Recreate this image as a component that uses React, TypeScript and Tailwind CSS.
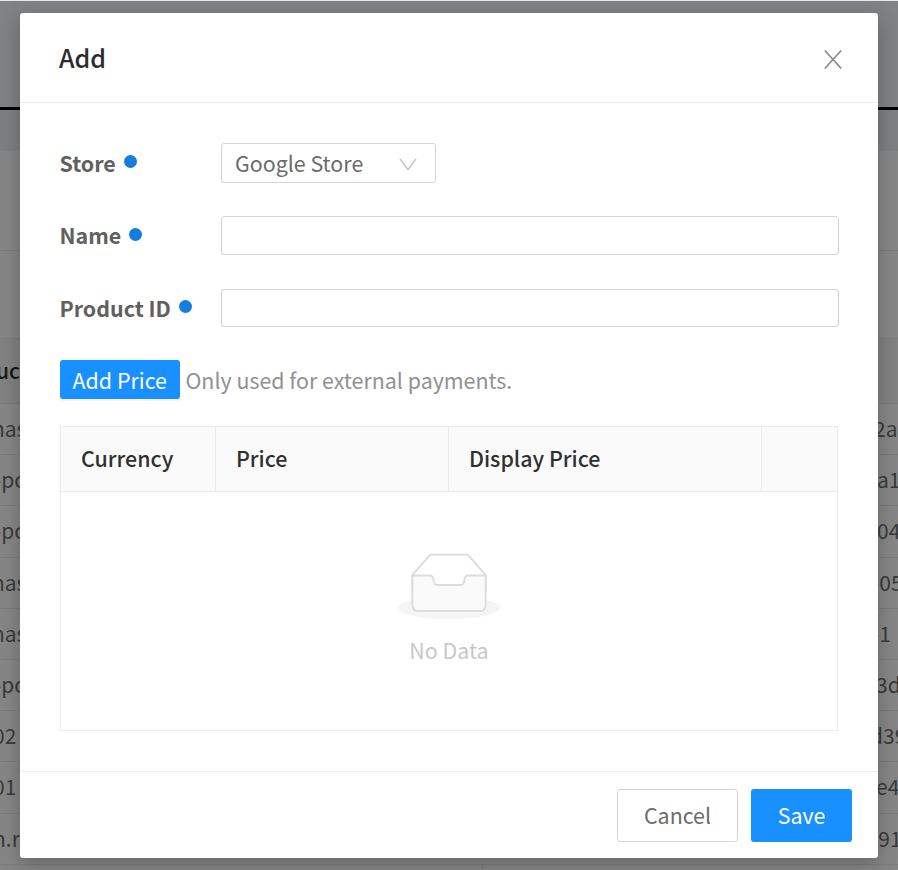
import React from "react";

type Row = { left: string; leftShift: string; right: string; rightShift: string };

const rows: Row[] = [
  { left: "has", leftShift: "-ml-[8px]", right: "2a", rightShift: "-ml-[4px]" },
  { left: "-pc", leftShift: "-ml-[6px]", right: "a1", rightShift: "-ml-[1px]" },
  { left: "-pc", leftShift: "-ml-[6px]", right: "04", rightShift: "-ml-[1px]" },
  { left: "has", leftShift: "-ml-[8px]", right: "-05", rightShift: "-ml-[6px]" },
  { left: "has", leftShift: "-ml-[8px]", right: "-1", rightShift: "-ml-[6px]" },
  { left: "-pc", leftShift: "-ml-[6px]", right: "3d", rightShift: "-ml-[2px]" },
  { left: "02", leftShift: "-ml-[7px]", right: "d39", rightShift: "-ml-[8px]" },
  { left: "01", leftShift: "-ml-[7px]", right: "e4", rightShift: "-ml-[2px]" },
  { left: "n.r", leftShift: "-ml-[7px]", right: "-91", rightShift: "-ml-[7px]" },
];

function PageBehind() {
  return (
    <div className="flex h-full flex-col border-t border-[#e8e8e8] bg-[#868686] text-[21px] leading-none text-[#3a3a3a]">
      <div className="h-[106px] shrink-0 bg-[#818284]" />
      <div className="h-[3px] shrink-0 bg-black" />
      <div className="h-[41px] shrink-0 bg-[#7d7f81]" />
      <div className="h-[100px] shrink-0 border-b border-[#7c7c7c]" />
      <div className="h-[88px] shrink-0 border-b border-[#7c7c7c]" />
      <div className="flex h-[65px] shrink-0 items-center border-b border-[#7c7c7c] bg-[#828282] pb-[2px] font-medium text-[#171717]">
        <div className="w-[20px] whitespace-nowrap">
          <div className="-ml-[4px]">uct</div>
        </div>
      </div>
      {rows.map((r, i) => (
        <div key={i} className="flex h-[51.2px] shrink-0 items-center justify-between border-b border-[#7c7c7c] pb-[1px]">
          <div className="w-[20px] whitespace-nowrap">
            <div className={r.leftShift}>{r.left}</div>
          </div>
          <div className="w-[20px] whitespace-nowrap">
            <div className={r.rightShift}>{r.right}</div>
          </div>
        </div>
      ))}
      <div className="ml-[482px] h-[10px] w-px bg-[#7c7c7c]" />
    </div>
  );
}

function Field({ label, children }: { label: string; children: React.ReactNode }) {
  return (
    <div className="flex items-center">
      <div className="flex w-[161px] shrink-0 items-center gap-[8px] pb-[1.5px] font-bold text-[#606060]">
        <span className="-ml-[0.5px]">{label}</span>
        <span className="-mt-[1px] h-[13px] w-[13px] rounded-full bg-[#157ddb]" />
      </div>
      {children}
    </div>
  );
}

function EmptyBox() {
  return (
    <svg width="102" height="66" viewBox="0 0 64 41" preserveAspectRatio="none" fill="none">
      <g transform="translate(0 1)">
        <ellipse fill="#f5f5f5" cx="32" cy="33" rx="32" ry="7" />
        <g stroke="#dcdcdc" strokeWidth="1.15">
          <path d="M55 12.76L44.854 1.258C44.367.474 43.656 0 42.907 0H21.093c-.749 0-1.46.474-1.947 1.257L9 12.761V22h46v-9.24z" fill="#fff" />
          <path
            d="M41.613 15.931c0-1.605.994-2.93 2.227-2.931H55v18.137C55 33.26 53.68 35 52.05 35h-40.1C10.32 35 9 33.259 9 31.137V13h11.16c1.233 0 2.227 1.323 2.227 2.928v.022c0 1.605 1.005 2.901 2.237 2.901h14.752c1.232 0 2.237-1.308 2.237-2.913v-.007z"
            fill="#fafafa"
          />
        </g>
      </g>
    </svg>
  );
}

export default function App() {
  return (
    <div className="relative h-[870px] w-[898px] overflow-hidden font-['Noto_Sans_CJK_SC',sans-serif] text-[21.4px] leading-none text-[#6b6b6b]">
      <PageBehind />
      <div className="absolute left-[20px] top-[13px] flex h-[845px] w-[858px] flex-col rounded-[3px] bg-white shadow-[0_6px_20px_rgba(0,0,0,0.25)]">
        <header className="flex h-[90px] shrink-0 items-center justify-between border-b border-[#ececec] pl-[39px] pr-[36px]">
          <h1 className="text-[25px] font-medium leading-none text-[#2c2c2c]">Add</h1>
          <svg className="mt-[4px]" width="18" height="19" viewBox="0 0 18 19" fill="none" stroke="#8c8c8c" strokeWidth="1.7">
            <path d="M0.8 0.5L17.2 18.5M17.2 0.5L0.8 18.5" />
          </svg>
        </header>
        <main className="flex flex-1 flex-col px-[40px] pt-[40px]">
          <div className="flex flex-col">
            <Field label="Store">
              <div className="flex h-[40px] w-[215px] items-center justify-between rounded-[3px] border-[1.5px] border-[#d4d4d4] pl-[13px] pr-[18px]">
                <span className="pb-[1px]">Google Store</span>
                <svg className="mt-[2px]" width="18" height="13" viewBox="0 0 18 13" fill="none" stroke="#bfbfbf" strokeWidth="1.4">
                  <path d="M1 0.8L9 11.6L17 0.8" />
                </svg>
              </div>
            </Field>
            <div className="mt-[33px]">
              <Field label="Name">
                <div className="h-[39px] w-[618px] shrink-0 rounded-[3px] border-[1.5px] border-[#d4d4d4]" />
              </Field>
            </div>
            <div className="mt-[34px]">
              <Field label="Product ID">
                <div className="h-[38px] w-[618px] shrink-0 rounded-[3px] border-[1.5px] border-[#d4d4d4]" />
              </Field>
            </div>
          </div>
          <div className="mt-[33px] flex h-[39px] items-center gap-[5.5px] text-[#919191]">
            <button className="-ml-[0.5px] flex h-[39px] w-[120.5px] items-center justify-center rounded-[3px] bg-[#1890ff] pt-px text-white shadow-[0_2px_0_rgba(0,0,0,0.04)]">
              Add Price
            </button>
            <span className="whitespace-nowrap pt-px">Only used for external payments.</span>
          </div>
          <div className="mt-[27px] flex h-[305px] flex-col border border-[#ececec]">
            <div className="flex h-[65px] shrink-0 items-stretch border-b border-[#ececec] bg-[#fafafa] font-medium text-[#303030]">
              <div className="flex w-[155px] items-center border-r border-[#ececec] pb-[2px] pl-[20px]">Currency</div>
              <div className="flex w-[233px] items-center border-r border-[#ececec] pb-[2px] pl-[20px]">Price</div>
              <div className="flex w-[313px] items-center border-r border-[#ececec] pb-[2px] pl-[20px]">Display Price</div>
            </div>
            <div className="flex flex-col items-center pt-[61px] text-[#c8c8c8]">
              <EmptyBox />
              <div className="mt-[19.5px]">No Data</div>
            </div>
          </div>
        </main>
        <footer className="flex h-[87px] shrink-0 items-center justify-end gap-[13px] border-t border-[#ececec] pr-[26px]">
          <button className="flex h-[53px] w-[121px] items-center justify-center rounded-[3px] border-[1.5px] border-[#d4d4d4]">Cancel</button>
          <button className="flex h-[53px] w-[101px] items-center justify-center rounded-[3px] bg-[#1890ff] text-white">Save</button>
        </footer>
      </div>
    </div>
  );
}
